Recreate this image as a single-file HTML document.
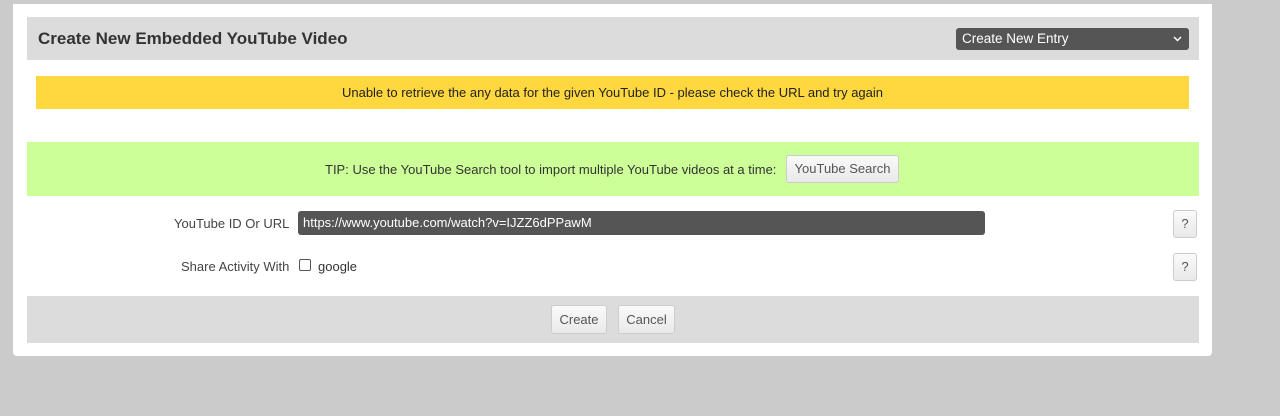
<!DOCTYPE html>
<html><head><style>
*{box-sizing:border-box;margin:0;padding:0}
body{width:1280px;height:416px;background:#cbcbcb;font-family:"Liberation Sans",Arial,sans-serif;position:relative;overflow:hidden;color:#333}
.card{position:absolute;left:13px;top:4px;width:1199px;height:352px;background:#fff;border-radius:0 0 4px 4px}
.abs{position:absolute}
.hdr{left:27px;top:17px;width:1172px;height:43px;background:#dcdcdc}
.hdr h1{position:absolute;left:11px;top:12px;font-size:17px;font-weight:bold;color:#333}
.sel{left:956px;top:28px;width:233px;height:22px;background:#555;border-radius:3px;color:#fff;font-size:13.5px;padding:3px 0 0 6px}
.sel svg{position:absolute;right:7px;top:8px}
.warn{left:36px;top:76px;width:1153px;height:33px;background:#ffd73e;font-size:13px;color:#222;text-align:center;line-height:33px}
.tip{left:27px;top:142px;width:1172px;height:54px;background:#cdff99;font-size:13px;color:#333}
.btn{position:absolute;background:linear-gradient(#fafafa,#e9e9e9);border:1px solid #ccc;border-radius:3px;font-size:13px;color:#555;text-align:center}
.lbl{font-size:13px;color:#444}
.inp{left:298px;top:211px;width:687px;height:24px;background:#555;border-radius:3px;color:#fff;font-size:13px;padding:4px 0 0 5px}
.foot{left:27px;top:296px;width:1172px;height:47px;background:#dcdcdc}
.cb{left:299px;top:259px;width:12px;height:12px;border:1px solid #555;border-radius:2px;background:#fff}
</style></head><body>
<div class="card"></div>
<div class="abs hdr"><h1>Create New Embedded YouTube Video</h1></div>
<div class="abs sel">Create New Entry<svg width="9" height="6" viewBox="0 0 9 6"><path d="M1 1l3.5 3.5L8 1" stroke="#fff" stroke-width="1.5" fill="none"/></svg></div>
<div class="abs warn">Unable to retrieve the any data for the given YouTube ID - please check the URL and try again</div>
<div class="abs tip"><span class="abs" style="left:298px;top:20px">TIP: Use the YouTube Search tool to import multiple YouTube videos at a time:</span></div>
<div class="btn" style="left:786px;top:155px;width:113px;height:28px;line-height:26px">YouTube Search</div>
<div class="abs lbl" style="left:174px;top:216px">YouTube ID Or URL</div>
<div class="abs inp">https://www.youtube.com/watch?v=IJZZ6dPPawM</div>
<div class="btn" style="left:1173px;top:210px;width:24px;height:28px;line-height:26px">?</div>
<div class="abs lbl" style="left:181px;top:259px">Share Activity With</div>
<div class="abs cb"></div>
<div class="abs lbl" style="left:318px;top:259px;color:#333">google</div>
<div class="btn" style="left:1173px;top:253px;width:24px;height:28px;line-height:26px">?</div>
<div class="abs foot"></div>
<div class="btn" style="left:551px;top:305px;width:56px;height:29px;line-height:27px">Create</div>
<div class="btn" style="left:618px;top:305px;width:57px;height:29px;line-height:27px">Cancel</div>
</body></html>
